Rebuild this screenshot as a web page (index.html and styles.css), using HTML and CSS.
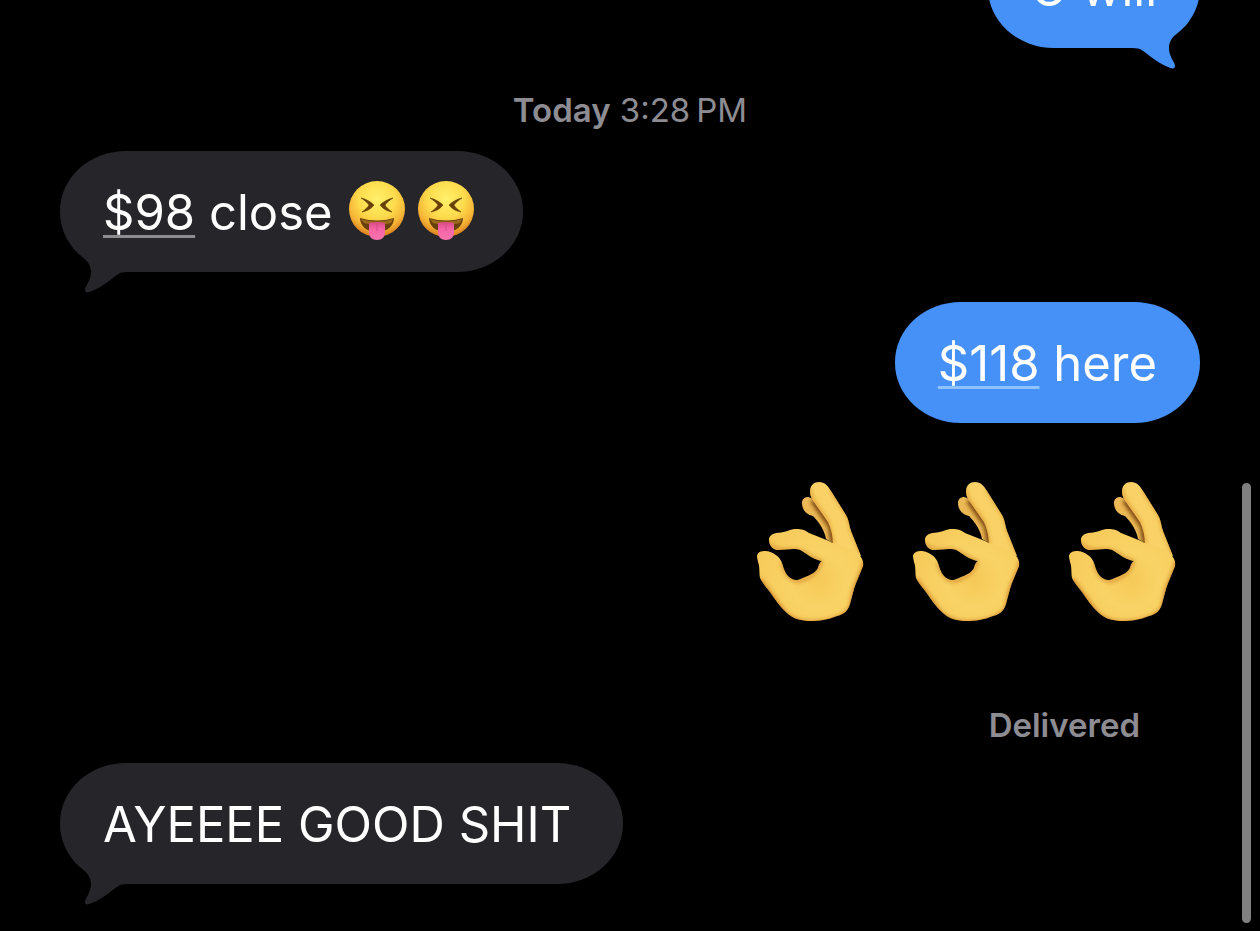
FILE: index.html
```
<!DOCTYPE html>
<html lang="en">
<head>
  <meta charset="UTF-8">
  <meta name="viewport" content="width=device-width, initial-scale=1.0">
  <title>Messages</title>
  <link rel="stylesheet" href="styles.css">
</head>
<body>
  <!-- Shared shapes -->
  <svg class="defs" width="0" height="0" aria-hidden="true">
    <defs>
      <radialGradient id="face-fill" cx="50%" cy="32%" r="66%">
        <stop offset="0" stop-color="#fff06a"/>
        <stop offset="0.5" stop-color="#fddb4c"/>
        <stop offset="0.8" stop-color="#f6b536"/>
        <stop offset="1" stop-color="#dd8420"/>
      </radialGradient>
      <linearGradient id="tongue-fill" x1="0" y1="0" x2="0" y2="1">
        <stop offset="0" stop-color="#d94a84"/>
        <stop offset="0.4" stop-color="#f665a6"/>
        <stop offset="1" stop-color="#f573ad"/>
      </linearGradient>
      <radialGradient id="palm-fill" gradientUnits="userSpaceOnUse" cx="62" cy="98" r="70">
        <stop offset="0" stop-color="#f6c957"/>
        <stop offset="0.4" stop-color="#f9d366"/>
        <stop offset="1" stop-color="#f6c858"/>
      </radialGradient>
      <filter id="soft" x="-20%" y="-20%" width="140%" height="140%">
        <feGaussianBlur stdDeviation="2"/>
      </filter>
      <path id="back-finger" d="M45 21C45 17 48 15 51 15C56 16 59 20 62 24L78 46V62L69 57C68 49 62 40 56 34C50 33 45 28 45 21Z"/>
      <path id="front-finger" d="M53 10C53 3 57 0 62 0C68 0 71 4 74 9L89 33C92 38 92 43 94 49L104 74L90 72L76 62C76 54 74 46 71 40L57 20C55 17 53 14 53 10Z"/>
      <path id="palm" d="M0 75C0 70 4 69 9 69C17 70 23 75 25 81C27 88 29 94 35 97C38 99 42 98 46 96C54 93 59 90 61 86C62 82 63 80 65 79C58 78 51 73 45 69C42 67 39 67 36 67L20 68C15 67 12 63 12 58C12 54 15 52 19 51C26 51 32 48 37 47C43 47 47 47 52 51L72 59C80 64 91 65 98 69C104 73 107 79 106 84C103 92 99 100 97 107L94 118C92 128 88 132 80 134C71 138 61 139 54 139C45 139 36 137 30 131C23 125 18 117 13 110C9 105 5 100 3 96C2 90 3 85 1 80Z"/>
      <clipPath id="back-clip"><use href="#back-finger"/></clipPath>
      <clipPath id="front-clip"><use href="#front-finger"/></clipPath>
      <clipPath id="palm-clip"><use href="#palm"/></clipPath>

      <symbol id="tail" viewBox="0 0 60 48">
        <path d="M1 0C6 9 21 14 21 27C21 36 15 41 15 45C15 48 18 48 22 46C34 41 43 32 50 28C53 27 56 27 60 27V0Z"/>
      </symbol>

      <symbol id="face" viewBox="0 0 58 60">
        <circle cx="29" cy="29" r="28" fill="url(#face-fill)"/>
        <path d="M13 18C18 19 23 22 26 25C23 29 19 31 14 32C17 30 20 27 21 25C19 22 16 20 13 18ZM45 18C40 19 35 22 32 25C35 29 39 31 44 32C41 30 38 27 37 25C39 22 42 20 45 18Z" fill="#674009" stroke="#674009" stroke-width="0.6"/>
        <path d="M12 38Q29 43 46 38C46 45 40 52 29 52C18 52 12 45 12 38Z" fill="#68400c"/>
        <path d="M13 39Q29 44 45 39L43 43Q29 47 16 43Z" fill="#9b6a1d"/>
        <path d="M21 43Q29 41 37 43V52C37 57 34 60 29 60C24 60 21 57 21 52Z" fill="url(#tongue-fill)"/>
        <path d="M29 44V51" stroke="#d54c8a" stroke-width="1"/>
      </symbol>

      <symbol id="ok-hand" viewBox="0 0 108 140">
        <use href="#back-finger" fill="#edb955"/>
        <g clip-path="url(#back-clip)" fill="none" filter="url(#soft)">
          <path d="M56 18L74 44L77 64" stroke="#75400d" stroke-width="6"/>
        </g>
        <use href="#front-finger" fill="#f9d166"/>
        <g clip-path="url(#front-clip)" fill="none">
          <path d="M52 6C52 16 60 24 70 39L76 62M74 7L91 34L95 48L105 74" stroke="#dc982f" stroke-width="3" filter="url(#soft)"/>
        </g>
        <use href="#palm" fill="url(#palm-fill)"/>
        <g clip-path="url(#palm-clip)" fill="none">
          <path d="M107 80V85L98 107L94 126C87 138 67 141 55 141C43 141 34 137 28 132L2 97" stroke="#cd7c20" stroke-width="4" filter="url(#soft)"/>
          <path d="M11 60C15 69 26 68 39 68C48 69 56 78 65 80M25 80C29 95 35 99 42 99C54 95 61 90 64 80" stroke="#d58e2d" stroke-width="3" filter="url(#soft)"/>
        </g>
      </symbol>
    </defs>
  </svg>

  <main class="thread">
    <div class="bubble sent">
      U will
      <svg class="tail" aria-hidden="true"><use href="#tail"/></svg>
    </div>

    <div class="timestamp"><strong>Today</strong> <time>3:28&#8201;PM</time></div>

    <div class="bubble received">
      <a class="amount" href="#">$98</a> close
      <span class="faces" role="img" aria-label="Squinting face with tongue, twice">
        <svg class="face"><use href="#face"/></svg>
        <svg class="face"><use href="#face"/></svg>
      </span>
      <svg class="tail" aria-hidden="true"><use href="#tail"/></svg>
    </div>

    <div class="bubble sent"><a class="amount" href="#">$118</a> here</div>

    <div class="big-emoji" role="img" aria-label="OK hand, three times">
      <svg class="ok-hand"><use href="#ok-hand"/></svg>
      <svg class="ok-hand"><use href="#ok-hand"/></svg>
      <svg class="ok-hand"><use href="#ok-hand"/></svg>
    </div>

    <div class="status">Delivered</div>

    <div class="bubble received">
      AYEEEE GOOD SHIT&#8201;
      <svg class="tail" aria-hidden="true"><use href="#tail"/></svg>
    </div>
  </main>

  <div class="scrollbar"></div>
</body>
</html>
```

FILE: styles.css
```
body {
  margin: 0;
  background-color: #000;
  color: #fff;
  font-family: Inter, "Liberation Sans", sans-serif;
}

.defs {
  position: absolute;
}

/* Thread is pinned to its latest message */
.thread {
  box-sizing: border-box;
  height: 100vh;
  padding: 0 60px 47px;
  display: flex;
  flex-direction: column;
  justify-content: flex-end;
  overflow: hidden;
}

.bubble {
  position: relative;
  flex-shrink: 0;
  padding: 31px 43px 29px;
  border-radius: 66px / 60px;
  font-size: 49px;
  line-height: 61px;
}

.received {
  align-self: flex-start;
  background-color: #26252a;
}

.sent {
  align-self: flex-end;
  background-color: #4691f8;
}

.tail {
  position: absolute;
  left: 10px;
  bottom: -21px;
  width: 60px;
  height: 48px;
  fill: #26252a;
}

.sent .tail {
  left: auto;
  right: 10px;
  fill: #4691f8;
  transform: scaleX(-1);
}

.amount {
  color: inherit;
  text-decoration: underline;
  text-decoration-color: #8d8d90;
  text-decoration-thickness: 3px;
  text-underline-offset: 5px;
  text-decoration-skip-ink: none;
}

.sent .amount {
  text-decoration-color: #8fc2fb;
}

.faces {
  display: inline-flex;
  gap: 11px;
  margin: -4px 5px -4px 2px;
  vertical-align: -10px;
}

.face {
  width: 58px;
  height: 60px;
}

.timestamp,
.status {
  flex-shrink: 0;
  color: #8d8c93;
  font-size: 33px;
  line-height: 40px;
}

.timestamp {
  margin: 42px 0 21px;
  text-align: center;
}

.timestamp strong,
.status {
  font-weight: 600;
}

.received + .sent {
  margin-top: 30px;
}

.big-emoji {
  align-self: flex-end;
  flex-shrink: 0;
  display: flex;
  gap: 48px;
  margin: 59px 23px 0 0;
}

.ok-hand {
  width: 108px;
  height: 140px;
}

.status {
  align-self: flex-end;
  margin: 83px 60px 18px 0;
}

.scrollbar {
  position: absolute;
  right: 9px;
  bottom: 8px;
  width: 9px;
  height: 440px;
  border-radius: 5px;
  background-color: #808080;
}
```
